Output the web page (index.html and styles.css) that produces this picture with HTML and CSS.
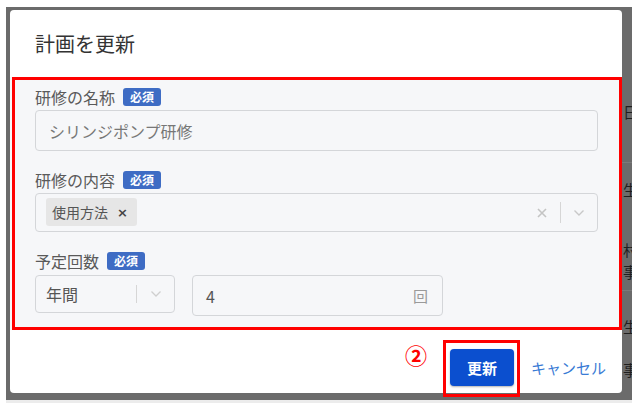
FILE: index.html
```html
<!DOCTYPE html>
<html lang="ja">
<head>
<meta charset="utf-8">
<title>計画を更新</title>
<link rel="stylesheet" href="styles.css">
</head>
<body>
<div class="backdrop">
  <div class="behind">
    <span class="bg-line" style="top:155px"></span>
    <span class="bg-line" style="top:283px"></span>
    <span class="bg-char" style="top:96px">日</span>
    <span class="bg-char" style="top:174px">生</span>
    <span class="bg-char" style="top:234px">村</span>
    <span class="bg-char" style="top:256px">事</span>
    <span class="bg-char" style="top:311px">生</span>
    <span class="bg-char" style="top:354px">事</span>
  </div>
  <div class="modal">
    <div class="modal-header">
      <h2 class="modal-title">計画を更新</h2>
    </div>
    <div class="modal-body">
      <div class="field">
        <div class="label-row"><span class="label">研修の名称</span><span class="badge">必須</span></div>
        <div class="text-input">シリンジポンプ研修</div>
      </div>
      <div class="field">
        <div class="label-row"><span class="label">研修の内容</span><span class="badge">必須</span></div>
        <div class="multi-select">
          <div class="chips">
            <span class="chip"><span class="chip-text">使用方法</span><span class="chip-x">×</span></span>
          </div>
          <div class="indicators">
            <svg class="ind-clear" width="12" height="12" viewBox="0 0 12 12"><path d="M2 2 L10 10 M10 2 L2 10" stroke="#c4c4c4" stroke-width="1.6" fill="none"/></svg>
            <span class="ind-sep"></span>
            <svg class="ind-chev" width="12" height="8" viewBox="0 0 12 8"><path d="M1.5 1.5 L6 6 L10.5 1.5" stroke="#c8c8c8" stroke-width="1.4" fill="none"/></svg>
          </div>
        </div>
      </div>
      <div class="field last">
        <div class="label-row"><span class="label">予定回数</span><span class="badge">必須</span></div>
        <div class="count-row">
          <div class="period-select">
            <span class="period-value">年間</span>
            <span class="ind-sep short"></span>
            <svg class="ind-chev" width="12" height="8" viewBox="0 0 12 8"><path d="M1.5 1.5 L6 6 L10.5 1.5" stroke="#cfcfcf" stroke-width="1.3" fill="none"/></svg>
          </div>
          <div class="num-input">
            <span class="num-value">4</span>
            <span class="unit">回</span>
          </div>
        </div>
      </div>
      <div class="annot body-annot"></div>
    </div>
    <div class="modal-footer">
      <span class="step">②</span>
      <span class="btn-wrap">
        <button class="btn-primary" type="button">更新</button>
        <span class="annot btn-annot"></span>
      </span>
      <a class="link-cancel" href="#">キャンセル</a>
    </div>
  </div>
</div>
</body>
</html>
```

FILE: styles.css
```css
html, body {
  margin: 0;
  padding: 0;
  overflow: hidden;
}
body {
  width: 632px;
  height: 403px;
  background: #ececec;
  font-family: "Noto Sans CJK JP", "Noto Sans", sans-serif;
  position: relative;
}
body::before {
  content: "";
  position: absolute;
  left: 0;
  top: 0;
  width: 632px;
  height: 7px;
  background: #ffffff;
}
body::after {
  content: "";
  position: absolute;
  left: 0;
  top: 0;
  width: 6px;
  height: 403px;
  background: #ffffff;
}
.backdrop {
  position: relative;
  margin: 7px 0 0 6px;
  width: 626px;
  height: 393px;
  background: #6b6b6b;
  padding: 3px 0 0 4px;
  box-sizing: border-box;
  overflow: visible;
}
.behind {
  position: absolute;
  left: 0;
  top: 0;
  right: 0;
  bottom: 0;
  overflow: hidden;
}
.bg-line {
  position: absolute;
  left: 600px;
  right: 0;
  height: 1px;
  background: #7a7a7a;
}
.bg-char {
  position: absolute;
  left: 617px;
  font-size: 15px;
  line-height: 18px;
  color: #1f1f1f;
}
.modal {
  position: relative;
  width: 612px;
  height: 383px;
  background: #ffffff;
  border-radius: 4px;
  display: flex;
  flex-direction: column;
}
.modal-header {
  height: 67px;
  padding-left: 25px;
  display: flex;
  align-items: center;
  flex-shrink: 0;
}
.modal-title {
  margin: 0;
  font-size: 20px;
  font-weight: 400;
  color: #333333;
  line-height: 24px;
  padding-top: 1px;
}
.modal-body {
  position: relative;
  height: 253px;
  flex-shrink: 0;
  background: #f6f7f9;
  padding: 11px 24px 0 25px;
  box-sizing: border-box;
}
.field {
  margin-bottom: 20px;
}
.label-row {
  display: flex;
  align-items: center;
  height: 18px;
  margin-bottom: 4px;
}
.field.last .label-row {
  margin-bottom: 5px;
}
.label {
  font-size: 16px;
  line-height: 18px;
  color: #5a5a5a;
}
.badge {
  margin-left: 8px;
  height: 18px;
  line-height: 18px;
  padding: 0 7px;
  background: #3e6cc4;
  color: #ffffff;
  font-size: 12px;
  font-weight: 700;
  border-radius: 3px;
}
.text-input {
  height: 41px;
  box-sizing: border-box;
  border: 1px solid #d4d6d9;
  border-radius: 4px;
  padding-left: 13px;
  display: flex;
  align-items: center;
  font-size: 16px;
  color: #777777;
}
.multi-select {
  height: 39px;
  box-sizing: border-box;
  border: 1px solid #d4d6d9;
  border-radius: 4px;
  padding: 4px 0 4px 10px;
  display: flex;
  align-items: stretch;
}
.chips {
  flex: 1;
  display: flex;
}
.chip {
  display: flex;
  align-items: center;
  background: #e6e6e6;
  border-radius: 3px;
  padding: 0 9px 0 6px;
  height: 28px;
}
.chip-text {
  font-size: 14px;
  color: #555555;
}
.chip-x {
  margin-left: 9px;
  font-size: 13px;
  font-weight: 700;
  color: #444444;
  font-family: "DejaVu Sans", sans-serif;
}
.indicators {
  display: flex;
  align-items: center;
  padding-right: 12px;
}
.ind-clear {
  margin-right: 12px;
}
.ind-sep {
  width: 1px;
  height: 21px;
  background: #d6d6d6;
  margin-right: 12px;
}
.count-row {
  display: flex;
  align-items: flex-start;
  gap: 17px;
}
.period-select {
  width: 140px;
  height: 38px;
  box-sizing: border-box;
  border: 1px solid #d4d6d9;
  border-radius: 4px;
  padding-left: 10px;
  display: flex;
  align-items: center;
}
.period-value {
  flex: 1;
  font-size: 16px;
  color: #555555;
}
.ind-sep.short {
  height: 18px;
  margin-right: 13px;
}
.period-select .ind-chev {
  margin-right: 12px;
}
.num-input {
  width: 251px;
  height: 41px;
  box-sizing: border-box;
  border: 1px solid #d4d6d9;
  border-radius: 4px;
  padding: 0 14px 0 13px;
  display: flex;
  align-items: center;
}
.num-value {
  flex: 1;
  font-size: 16px;
  color: #555555;
}
.unit {
  font-size: 15px;
  color: #9a9a9a;
}
.annot {
  position: absolute;
  border: 3px solid #ff0000;
  pointer-events: none;
}
.body-annot {
  top: 0;
  left: 2px;
  right: 0;
  bottom: 0;
}
.modal-footer {
  flex: 1;
  display: flex;
  align-items: center;
  justify-content: flex-end;
  padding: 12px 16px 0 0;
}
.step {
  align-self: flex-start;
  margin-top: 0;
  margin-right: 23px;
  font-size: 22px;
  font-weight: 700;
  line-height: 24px;
  color: #ff0000;
}
.btn-wrap {
  position: relative;
  display: flex;
  margin-right: 17px;
}
.btn-primary {
  width: 64px;
  height: 37px;
  border: none;
  border-radius: 4px;
  background: #0b4fcf;
  color: #ffffff;
  font-family: "Noto Sans CJK JP", sans-serif;
  font-size: 15px;
  font-weight: 700;
  padding: 0;
  box-shadow: 0 1px 2px rgba(0, 0, 0, 0.3);
}
.btn-annot {
  top: -9px;
  left: -7px;
  right: -6px;
  bottom: -11px;
}
.link-cancel {
  font-size: 15px;
  color: #3a7bd5;
  text-decoration: none;
}
```
